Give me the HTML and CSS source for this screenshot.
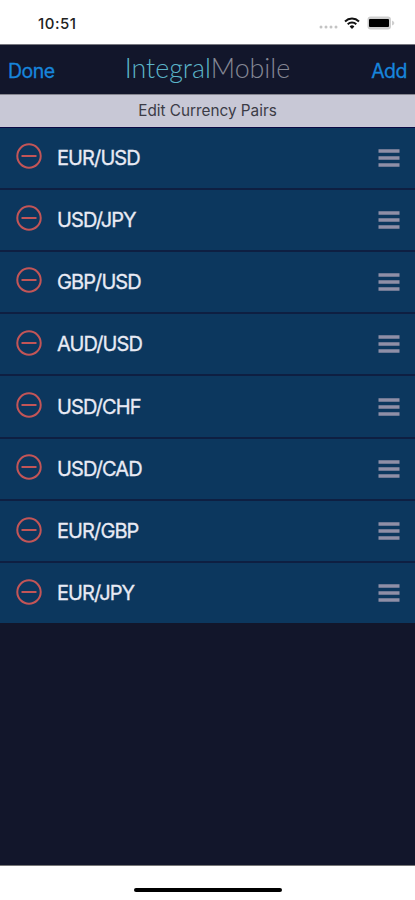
FILE: index.html
```html
<!DOCTYPE html>
<html dir="ltr" lang="en">
  <head>
    <meta charset="utf-8" />
    <meta name="viewport" content="width=device-width, initial-scale=1.0" />
    <title>Edit Currency Pairs</title>
    <link rel="stylesheet" href="styles.css">
  </head>

  <body>
    <svg class="symbols" aria-hidden="true">
      <symbol id="remove" viewBox="0 0 26 26">
        <circle cx="13" cy="13" r="11.7" />
        <path d="M5.5 13h15" />
      </symbol>
      <symbol id="drag" viewBox="0 0 22 20">
        <path d="M0.5 3h21M0.5 10h21M0.5 17h21" />
      </symbol>
    </svg>

    <div class="status-bar">
      <span class="time">10:51</span>
      <div class="indicators">
        <svg class="signal" viewBox="0 0 19 4">
          <circle cx="2" cy="2" r="1.5" />
          <circle cx="7" cy="2" r="1.5" />
          <circle cx="12" cy="2" r="1.5" />
          <circle cx="17" cy="2" r="1.5" />
        </svg>
        <svg class="wifi" viewBox="0 0 16 12">
          <path d="M1 4.4a10.2 10.2 0 0 1 14 0" />
          <path d="M3.7 7.2a6.3 6.3 0 0 1 8.6 0" />
          <path class="dot" d="M8 12L5.6 9.5a3.5 3.5 0 0 1 4.8 0z" />
        </svg>
        <svg class="battery" viewBox="0 0 28 14">
          <rect class="shell" x="0.5" y="0.5" width="23.5" height="13" rx="3.2" />
          <path class="shell" d="M25 4.5q2.4 1 2.4 2.5t-2.4 2.5z" />
          <rect x="2" y="3" width="20" height="8" rx="1" />
        </svg>
      </div>
    </div>

    <div class="nav-bar">
      <a class="nav-action">Done</a>
      <h1 class="logo"><span>Integral</span>Mobile</h1>
      <a class="nav-action">Add</a>
    </div>

    <h2 class="subtitle">Edit Currency Pairs</h2>

    <ul class="pairs">
      <li>
        <svg class="remove"><use href="#remove" /></svg>
        <span class="pair">EUR/USD</span>
        <svg class="drag"><use href="#drag" /></svg>
      </li>
      <li>
        <svg class="remove"><use href="#remove" /></svg>
        <span class="pair">USD/JPY</span>
        <svg class="drag"><use href="#drag" /></svg>
      </li>
      <li>
        <svg class="remove"><use href="#remove" /></svg>
        <span class="pair">GBP/USD</span>
        <svg class="drag"><use href="#drag" /></svg>
      </li>
      <li>
        <svg class="remove"><use href="#remove" /></svg>
        <span class="pair">AUD/USD</span>
        <svg class="drag"><use href="#drag" /></svg>
      </li>
      <li>
        <svg class="remove"><use href="#remove" /></svg>
        <span class="pair">USD/CHF</span>
        <svg class="drag"><use href="#drag" /></svg>
      </li>
      <li>
        <svg class="remove"><use href="#remove" /></svg>
        <span class="pair">USD/CAD</span>
        <svg class="drag"><use href="#drag" /></svg>
      </li>
      <li>
        <svg class="remove"><use href="#remove" /></svg>
        <span class="pair">EUR/GBP</span>
        <svg class="drag"><use href="#drag" /></svg>
      </li>
      <li>
        <svg class="remove"><use href="#remove" /></svg>
        <span class="pair">EUR/JPY</span>
        <svg class="drag"><use href="#drag" /></svg>
      </li>
    </ul>

    <div class="home-area">
      <div class="home-indicator"></div>
    </div>
  </body>
</html>
```
FILE: styles.css
```css
* {
  box-sizing: border-box;
}

body {
  display: flex;
  flex-direction: column;
  height: 900px;
  margin: 0;
  background-color: #12162b;
  font-family: Inter, "Liberation Sans", sans-serif;
}

.symbols {
  display: none;
}

/* status bar */
.status-bar {
  display: flex;
  align-items: center;
  justify-content: space-between;
  height: 45px;
  padding: 2px 20px 0 38px;
  background-color: #fff;
  border-bottom: 1px solid #77777f;
}

.time {
  color: #222;
  font-size: 15px;
  font-weight: 500;
  letter-spacing: 0.5px;
}

.indicators {
  display: flex;
  align-items: center;
}

.signal {
  width: 19px;
  height: 4px;
  margin: 8px 6px 0 0;
  fill: #c4c4c4;
}

.wifi {
  width: 16px;
  height: 12px;
  margin-right: 7px;
  fill: none;
  stroke: #111;
  stroke-width: 2;
}

.wifi .dot {
  fill: #111;
  stroke: none;
}

.battery {
  width: 28px;
  height: 14px;
}

.battery .shell {
  fill: #cfcfcf;
}

/* navigation */
.nav-bar {
  display: flex;
  align-items: center;
  justify-content: space-between;
  height: 49px;
  padding: 0 8px;
  background-color: #12162b;
}

.nav-action {
  width: 60px;
  padding-top: 2px;
  color: #1785db;
  font-size: 19.5px;
  letter-spacing: -0.5px;
  -webkit-text-stroke: 0.3px #1785db;
}

.nav-action:last-child {
  text-align: right;
}

.logo {
  margin: 0;
  padding: 0 0 4px;
  color: #858794;
  font-family: Lato, sans-serif;
  font-size: 26.8px;
  font-weight: 300;
  white-space: nowrap;
}

.logo span {
  color: #5bb4c8;
}

.subtitle {
  height: 34px;
  margin: 0;
  border-top: 1px solid #85858f;
  border-bottom: 1px solid #0a0a45;
  background-color: #c8c8d6;
  color: #3b3b46;
  font-size: 15.3px;
  font-weight: 400;
  line-height: 32px;
  text-align: center;
}

/* pairs */
.pairs {
  flex: 1;
  margin: 0;
  padding: 0;
  list-style: none;
}

.pairs li {
  display: flex;
  align-items: center;
  height: 62.3px;
  padding: 0 15px 0 16px;
  border-bottom: 2px solid #0e1f42;
  background-color: #0c375e;
}

.pairs li:first-child {
  height: 61.5px;
}

.pairs li:last-child {
  height: 60px;
  border-bottom: 0;
}

.remove {
  width: 26px;
  height: 26px;
  margin-bottom: 3px;
  fill: none;
  stroke: #c35557;
  stroke-width: 2;
}

.pair {
  flex: 1;
  margin-left: 15px;
  color: #e8eaf4;
  font-size: 20px;
  letter-spacing: -0.9px;
  -webkit-text-stroke: 0.3px #e8eaf4;
}

.drag {
  width: 22px;
  height: 20px;
  fill: none;
  stroke: #8f8fa7;
  stroke-width: 3.4;
}

/* home indicator */
.home-area {
  display: flex;
  justify-content: center;
  height: 35px;
  padding-top: 22px;
  border-top: 1px solid #777;
  background-color: #fff;
}

.home-indicator {
  width: 148px;
  height: 4px;
  border-radius: 2px;
  background-color: #000;
}
```
